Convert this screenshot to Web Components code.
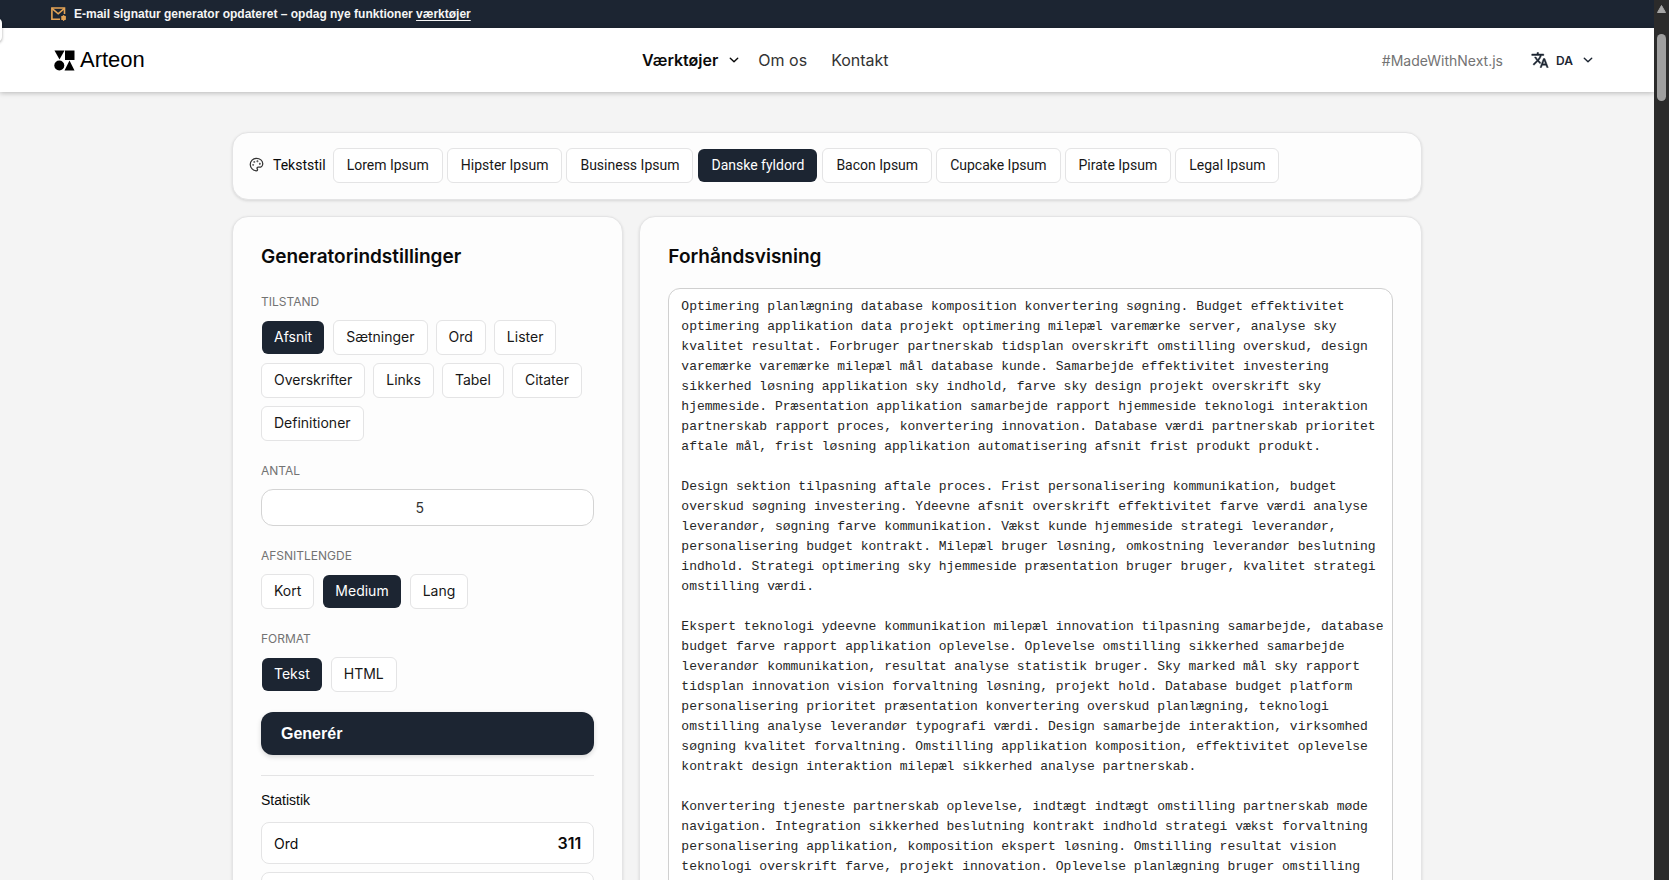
<!DOCTYPE html>
<html lang="da">
<head>
<meta charset="utf-8">
<title>Arteon – Lorem Ipsum generator</title>
<style>
:root{--ink:#1c2532;--line:#e4e4e5;--page:#f4f4f4;--card:#fdfdfd;--muted:#737373}
body{margin:0;background:var(--page);color:#0a0a0a;font-family:Inter,"Liberation Sans",sans-serif;font-size:14px}
</style>
</head>
<body>
<app-shell>
  <promo-banner slot="top"></promo-banner>
  <site-header slot="top"></site-header>
  <style-picker></style-picker>
  <split-layout>
    <panel-card heading="Generatorindstillinger">
      <settings-form></settings-form>
    </panel-card>
    <panel-card heading="Forhåndsvisning" tight>
      <text-preview></text-preview>
    </panel-card>
  </split-layout>
</app-shell>
<script>
const define = (name, html, setup) => {
  const tpl = document.createElement('template');
  tpl.innerHTML = '<style>*{box-sizing:border-box}button,input,select,textarea{font:inherit;color:inherit;margin:0}</style>' + html;
  customElements.define(name, class extends HTMLElement {
    constructor() {
      super();
      this.attachShadow({mode: 'open'}).append(tpl.content.cloneNode(true));
    }
    connectedCallback() { if (setup) setup(this, this.shadowRoot); }
  });
};
const chevron = '<svg width="16" height="16" viewBox="0 0 16 16" fill="none" stroke="currentColor" stroke-width="1.4" stroke-linecap="round" stroke-linejoin="round" aria-hidden="true"><path d="M4.300 6.200 8 9.800l3.700-3.600"/></svg>';

define('choice-chip', `
<style>
:host{display:block}
button{display:block;height:35px;padding:0 12px 2px;border:1px solid var(--line);border-radius:6px;background:#fff;color:#171717;font-size:14px;line-height:20px;white-space:nowrap;cursor:pointer}
:host([compact]) button{font-family:Roboto,sans-serif;padding:0 13px 2px}
:host([selected]) button{background:var(--ink);background-clip:padding-box;border-color:transparent;color:#fff;border-radius:7px}
</style>
<button type="button"><slot></slot></button>`,
(el, root) => root.querySelector('button').setAttribute('aria-pressed', el.hasAttribute('selected')));

define('choice-group', `
<style>
:host{display:block}
.label{font-size:12px;line-height:20px;color:var(--muted);text-transform:uppercase;margin-bottom:8px}
.items{display:flex;flex-wrap:wrap;gap:8px}
</style>
<div role="group" aria-labelledby="l"><div class="label" id="l"></div><div class="items"><slot></slot></div></div>`,
(el, root) => root.querySelector('.label').textContent = el.getAttribute('label'));

define('stat-row', `
<style>
:host{display:flex;justify-content:space-between;align-items:center;height:42px;box-sizing:border-box;padding:0 12px;border:1px solid var(--line);border-radius:8px;background:#fff}
b{font-size:16px;font-weight:600}
</style>
<span><slot></slot></span><b></b>`,
(el, root) => root.querySelector('b').textContent = el.getAttribute('value') || '');

define('scroll-rail', `
<style>
:host{display:flex;flex-direction:column;align-items:center;gap:21px;background:#2b2b2b;padding-top:5px;box-sizing:border-box}
.thumb{width:9px;height:67px;border-radius:5px;background:#9f9f9f}
</style>
<svg width="9" height="8" viewBox="0 0 9 8" aria-hidden="true"><path d="M4.5 0.5 8.5 7.5h-8z" fill="#a6a6a6" stroke="#a6a6a6" stroke-linejoin="round"/></svg>
<div class="thumb"></div>`);

define('app-shell', `
<style>
:host{display:grid;grid-template-columns:minmax(0,1fr) 15px;height:100vh;position:relative}
.view{overflow-y:auto;scrollbar-width:none}
main{max-width:1190px;margin:40px auto;display:flex;flex-direction:column;gap:16px}
.tab{position:absolute;left:-10px;top:18px;width:12px;height:24px;border-radius:5px;background:#fff;box-shadow:0 1px 3px rgba(0,0,0,.35);z-index:3}
</style>
<div class="view"><slot name="top"></slot><main><slot></slot></main></div>
<scroll-rail></scroll-rail>
<div class="tab"></div>`);

define('promo-banner', `
<style>
:host{display:flex;align-items:center;gap:7px;height:28px;box-sizing:border-box;padding:0 51px;background:var(--ink);color:#f5f5f5;font-size:12px;font-weight:600;line-height:16px}
p{margin:0;font-family:"Liberation Sans",sans-serif}
a{color:inherit;text-underline-offset:2px}
</style>
<svg width="16" height="14" viewBox="0 0 16 14" fill="none" stroke="#e5a456" stroke-width="1.6" aria-hidden="true"><path d="M9 12.2H.9V1h12.6v6"/><path d="M.9 1.4 7.2 6.8 13.5 1.4"/><circle cx="12.6" cy="11" r="1.6"/><path d="M12.6 8.2v5.6M10.2 9.6l4.800 2.800M15 9.600l-4.800 2.800" stroke-width="1"/></svg>
<p>E-mail signatur generator opdateret – opdag nye funktioner <a href="#tools">værktøjer</a></p>`);

define('site-header', `
<style>
:host{display:block;position:relative;z-index:2;background:#fff;box-shadow:0 1px 5px rgba(0,0,0,.25)}
header{display:flex;justify-content:space-between;align-items:center;height:64px;padding:0 58px 0 54px}
a{color:inherit;text-decoration:none}
.logo{display:flex;align-items:center;gap:5px;font-family:"Liberation Sans",sans-serif;font-size:22px;color:#000}
nav{display:flex;align-items:center;font-size:16px;color:#333;padding-left:4px}
nav a{padding-left:12px}
nav a+a{padding-left:24px}
nav button{display:flex;align-items:center;gap:8px;padding:0 4px 0 0;border:0;background:none;font-weight:600;color:#0a0a0a}
.right{display:flex;align-items:center;gap:28px;color:var(--muted)}
label{display:flex;align-items:center;gap:7px;color:var(--ink)}
select{appearance:none;border:0;padding:0;background:none;font-size:12px;font-weight:600}
</style>
<header>
<a class="logo" href="#home"><svg width="21" height="21" viewBox="0 0 21 21" fill="#000" aria-hidden="true"><path d="M.5.5h10L5.5 9.5z"/><path d="M11 .5h9.5v9.5H11z"/><circle cx="5.3" cy="15.500" r="5"/><path d="M15.500 10.500 20.500 20.500h-10z"/></svg>Arteon</a>
<nav aria-label="Hovedmenu"><button type="button" aria-haspopup="true">Værktøjer ${chevron}</button><a href="#about">Om os</a><a href="#contact">Kontakt</a></nav>
<div class="right"><a href="#next">#MadeWithNext.js</a>
<label><svg width="18" height="18" viewBox="0 0 24 24" fill="currentColor" aria-hidden="true"><path d="m12.87 15.07-2.54-2.51.03-.03A17.52 17.52 0 0 0 14.07 6H17V4h-7V2H8v2H1v1.99h11.17C11.5 7.92 10.44 9.75 9 11.35 8.07 10.32 7.3 9.19 6.69 8h-2c.73 1.63 1.73 3.17 2.98 4.56l-5.09 5.02L4 19l5-5 3.11 3.11.76-2.04zM18.5 10h-2L12 22h2l1.12-3h4.75L21 22h2l-4.5-12zm-2.62 7 1.62-4.33L19.12 17h-3.24z" stroke="currentColor" stroke-width=".6"/></svg><select aria-label="Sprog"><option>DA</option></select>${chevron}</label></div>
</header>`);

define('style-picker', `
<style>
:host{display:flex;align-items:center;gap:7px;box-sizing:border-box;padding:15px 16px 16px;border:1px solid var(--line);border-radius:16px;background:var(--card);box-shadow:0 1px 3px rgba(0,0,0,.12)}
.title{display:flex;align-items:center;gap:9px;font-family:Roboto,sans-serif;font-size:14px;line-height:20px;padding-bottom:2px}
.items{display:flex;flex-wrap:wrap;gap:4px}
</style>
<div class="title" id="t"><svg width="15" height="15" viewBox="0 0 24 24" fill="none" stroke="#333" stroke-width="2" stroke-linecap="round" stroke-linejoin="round" aria-hidden="true"><path d="M12 2a10 10 0 0 0 0 20c1 0 1.700-.75 1.700-1.700 0-.44-.18-.84-.44-1.130-.3-.3-.44-.65-.44-1.130a1.640 1.640 0 0 1 1.670-1.670h2c3.050 0 5.550-2.500 5.550-5.550C22 6 17.500 2 12 2z"/><circle cx="13.500" cy="6.800" r=".5"/><circle cx="17.300" cy="10.800" r=".5"/><circle cx="8.500" cy="7.800" r=".5"/><circle cx="6.700" cy="12.500" r=".5"/></svg>Tekststil</div>
<div class="items" role="group" aria-labelledby="t">
<choice-chip compact>Lorem Ipsum</choice-chip><choice-chip compact>Hipster Ipsum</choice-chip><choice-chip compact>Business Ipsum</choice-chip><choice-chip compact selected>Danske fyldord</choice-chip><choice-chip compact>Bacon Ipsum</choice-chip><choice-chip compact>Cupcake Ipsum</choice-chip><choice-chip compact>Pirate Ipsum</choice-chip><choice-chip compact>Legal Ipsum</choice-chip>
</div>`);

define('split-layout', `
<style>:host{display:grid;grid-template-columns:minmax(0,1fr) minmax(0,2fr);gap:16px}</style><slot></slot>`);

define('panel-card', `
<style>
:host{display:block;box-sizing:border-box;padding:28px;border:1px solid var(--line);border-radius:16px;background:var(--card);box-shadow:0 1px 3px rgba(0,0,0,.12)}
h2{margin:0 0 23px;font-size:19px;font-weight:600;line-height:24px}
:host([tight]) h2{margin-bottom:19px}
</style>
<h2></h2><slot></slot>`,
(el, root) => root.querySelector('h2').textContent = el.getAttribute('heading'));

define('settings-form', `
<style>
:host{display:block}
form{display:flex;flex-direction:column;gap:20px}
.field{display:flex;flex-direction:column;gap:8px}
label{font-size:12px;line-height:20px;color:var(--muted)}
input{width:100%;height:37px;border:1px solid #d4d4d4;border-radius:12px;background:#fff;text-align:center;color:#333;appearance:textfield;padding:0 28px 0 12px}
input::-webkit-inner-spin-button{appearance:none}
.go{height:43px;border:0;border-radius:12px;background:var(--ink);color:#fff;padding:0 20px;text-align:left;font:600 16px "Liberation Sans",sans-serif;box-shadow:0 2px 5px rgba(0,0,0,.15)}
.stats{border-top:1px solid var(--line);padding-top:14px;display:flex;flex-direction:column;gap:8px}
h3{margin:0 0 4px;font:500 14px/20px "Liberation Sans",sans-serif}
</style>
<form>
<choice-group label="Tilstand"><choice-chip selected>Afsnit</choice-chip><choice-chip>Sætninger</choice-chip><choice-chip>Ord</choice-chip><choice-chip>Lister</choice-chip><choice-chip>Overskrifter</choice-chip><choice-chip>Links</choice-chip><choice-chip>Tabel</choice-chip><choice-chip>Citater</choice-chip><choice-chip>Definitioner</choice-chip></choice-group>
<div class="field"><label for="n">ANTAL</label><input id="n" type="number" value="5" min="1"></div>
<choice-group label="Afsnitlengde"><choice-chip>Kort</choice-chip><choice-chip selected>Medium</choice-chip><choice-chip>Lang</choice-chip></choice-group>
<choice-group label="Format"><choice-chip selected>Tekst</choice-chip><choice-chip>HTML</choice-chip></choice-group>
<button class="go" type="button">Generér</button>
<section class="stats"><h3>Statistik</h3><stat-row value="311">Ord</stat-row><stat-row></stat-row></section>
</form>`);

define('text-preview', `
<style>
:host{display:block}
textarea{display:block;width:100%;height:760px;resize:none;border:1px solid #d0d0d0;border-radius:12px;background:#fff;padding:8px 4px 8px 12px;font:13px/20px "Liberation Mono",monospace;color:#262626;white-space:pre;overflow:hidden;outline:0}
</style>
<textarea readonly aria-label="Forhåndsvisning">
Optimering planlægning database komposition konvertering søgning. Budget effektivitet
optimering applikation data projekt optimering milepæl varemærke server, analyse sky
kvalitet resultat. Forbruger partnerskab tidsplan overskrift omstilling overskud, design
varemærke varemærke milepæl mål database kunde. Samarbejde effektivitet investering
sikkerhed løsning applikation sky indhold, farve sky design projekt overskrift sky
hjemmeside. Præsentation applikation samarbejde rapport hjemmeside teknologi interaktion
partnerskab rapport proces, konvertering innovation. Database værdi partnerskab prioritet
aftale mål, frist løsning applikation automatisering afsnit frist produkt produkt.

Design sektion tilpasning aftale proces. Frist personalisering kommunikation, budget
overskud søgning investering. Ydeevne afsnit overskrift effektivitet farve værdi analyse
leverandør, søgning farve kommunikation. Vækst kunde hjemmeside strategi leverandør,
personalisering budget kontrakt. Milepæl bruger løsning, omkostning leverandør beslutning
indhold. Strategi optimering sky hjemmeside præsentation bruger bruger, kvalitet strategi
omstilling værdi.

Ekspert teknologi ydeevne kommunikation milepæl innovation tilpasning samarbejde, database
budget farve rapport applikation oplevelse. Oplevelse omstilling sikkerhed samarbejde
leverandør kommunikation, resultat analyse statistik bruger. Sky marked mål sky rapport
tidsplan innovation vision forvaltning løsning, projekt hold. Database budget platform
personalisering prioritet præsentation konvertering overskud planlægning, teknologi
omstilling analyse leverandør typografi værdi. Design samarbejde interaktion, virksomhed
søgning kvalitet forvaltning. Omstilling applikation komposition, effektivitet oplevelse
kontrakt design interaktion milepæl sikkerhed analyse partnerskab.

Konvertering tjeneste partnerskab oplevelse, indtægt indtægt omstilling partnerskab møde
navigation. Integration sikkerhed beslutning kontrakt indhold strategi vækst forvaltning
personalisering applikation, komposition ekspert løsning. Omstilling resultat vision
teknologi overskrift farve, projekt innovation. Oplevelse planlægning bruger omstilling</textarea>`);
</script>
</body>
</html>
